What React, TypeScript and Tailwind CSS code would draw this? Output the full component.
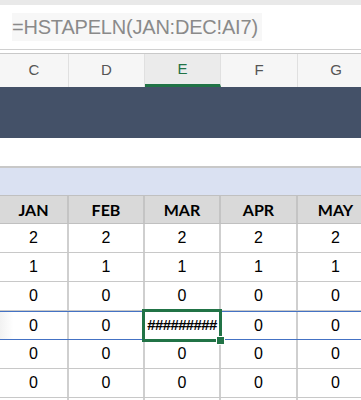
import React from 'react';

const cols = ['C', 'D', 'E', 'F', 'G'];
const months = ['JAN', 'FEB', 'MAR', 'APR', 'MAY'];
const rows = [2, 1, 0, 0, 0, 0, 0];
const widths = ['w-[69px]', 'w-[76px]', 'w-[76px]', 'w-[77px]', 'w-[77px]'];

function ColumnHeaders() {
  return (
    <div className="flex h-[34px] bg-[#f6f6f6] border-t border-[#c9c9c9] font-['Liberation_Sans',sans-serif]">
      {cols.map((c, i) => (
        <div
          key={c}
          className={`${widths[i]} shrink-0 flex items-center justify-center text-[15px] border-r border-[#e0e0e0] ${
            c === 'E' ? 'bg-[#ebebeb] text-[#217346] border-b-[3px] border-b-[#217346]' : 'text-[#555]'
          }`}
        >
          {c}
        </div>
      ))}
    </div>
  );
}

function Row({ values, idx }: { values: number[]; idx: number }) {
  const active = idx === 3;
  return (
    <div
      className={`flex h-[29px] font-['Liberation_Sans',sans-serif] ${
        active ? 'border-y border-[#4472c4]' : 'border-b border-[#c8c8c8]'
      }`}
    >
      {values.map((v, i) => (
        <div
          key={i}
          className={`${widths[i]} shrink-0 relative flex items-center justify-center text-[16px] text-black border-r-2 border-[#cfcfcf] ${
            active && i === 0 ? 'bg-gradient-to-r from-[#f2f2f2] via-white via-20% to-white' : 'bg-white'
          }`}
        >
          {active && i === 2 ? (
            <div className="absolute z-10 -left-[3px] -top-[3px] w-[80px] h-[33px] border-[3px] border-[#217346] flex items-center justify-center text-[15px] tracking-[-0.6px] font-bold bg-white">
              #########
              <div className="absolute -right-[6px] -bottom-[6px] w-[9px] h-[9px] bg-[#217346] border border-white" />
            </div>
          ) : (
            v
          )}
        </div>
      ))}
    </div>
  );
}

export default function App() {
  return (
    <div className="w-[361px] h-[400px] overflow-hidden bg-white font-['Lato',sans-serif]">
      <div className="h-[5px] bg-[#e9e9e9]" />
      <div className="h-[45px] flex items-center px-3 border-b border-[#d0d0d0]">
        <span className="bg-[#f7f7f7] text-[#8a8a8a] text-[20px] tracking-[-0.2px] font-['Liberation_Sans',sans-serif] leading-[28px] pr-1">
          =HSTAPELN(JAN:DEC!AI7)
        </span>
      </div>
      <div className="h-[3px] bg-white" />
      <ColumnHeaders />
      <div className="h-[51px] bg-[#445168]" />
      <div className="h-[28px] bg-white" />
      <div className="h-[29px] bg-[#dae1f2] border-t-2 border-[#c8c8c8]" />
      <div className="flex h-[29px] bg-[#d9d9d9] border-y border-[#c0c0c0]">
        {months.map((m, i) => (
          <div
            key={m}
            className={`${widths[i]} shrink-0 flex items-center justify-center font-bold text-[16px] text-black border-r-2 border-[#c4c4c4]`}
          >
            {m}
          </div>
        ))}
      </div>
      {rows.map((v, r) => (
        <Row key={r} idx={r} values={[v, v, v, v, v]} />
      ))}
    </div>
  );
}
